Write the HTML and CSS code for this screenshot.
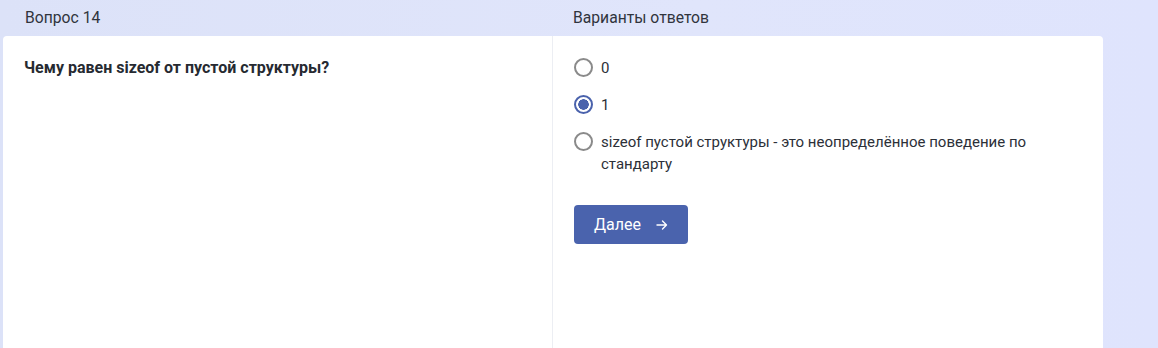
FILE: index.html
```html
<html>
<head>
    <link rel="stylesheet" href="styles.css">
</head>
<body>
    <div class="quiz">
        <div class="quiz-header">
            <div class="header-cell">Вопрос 14</div>
            <div class="header-cell">Варианты ответов</div>
        </div>

        <div class="quiz-card">
            <div class="question-col">
                <h2 class="question-text">Чему равен sizeof от пустой структуры?</h2>
            </div>
            <div class="answers-col">
                <label class="option-label">
                    <input type="radio" name="answer" value="0">
                    <span>0</span>
                </label>
                <label class="option-label">
                    <input type="radio" name="answer" value="1" checked>
                    <span>1</span>
                </label>
                <label class="option-label">
                    <input type="radio" name="answer" value="ub">
                    <span>sizeof пустой структуры - это неопределённое поведение по стандарту</span>
                </label>

                <button class="btn">
                    Далее
                    <svg class="btn-icon" width="12" height="12" viewBox="0 0 12 12">
                        <path d="M1 6 H10.5 M6.5 2 L10.5 6 L6.5 10" fill="none" stroke="#fff" stroke-width="1.4" stroke-linecap="round" stroke-linejoin="round"/>
                    </svg>
                </button>
            </div>
        </div>
    </div>
</body>
</html>
```

FILE: styles.css
```css
body {
    font-family: Roboto, "Liberation Sans", sans-serif;
    margin: 0;
    height: 348px;
    overflow: hidden;
    background: linear-gradient(90deg, #dce2f8 0%, #e0e5fb 60%, #dfe4fd 100%);
    color: #2c3038;
}

.quiz {
    width: 1100px;
    margin-left: 3px;
}

.quiz-header {
    display: grid;
    grid-template-columns: 550px 1fr;
    height: 36px;
    align-items: center;
}

.header-cell {
    font-size: 15.7px;
    color: #30343d;
    padding-left: 22px;
    padding-bottom: 2px;
}

.header-cell + .header-cell {
    padding-left: 20px;
}

.quiz-card {
    background-color: #fff;
    border-radius: 4px 4px 0 0;
    display: grid;
    grid-template-columns: 550px 1fr;
    min-height: 320px;
}

.question-col {
    padding: 21px 21px;
    border-right: 1px solid #eceef3;
}

.question-text {
    font-size: 16px;
    font-weight: bold;
    line-height: 22px;
    margin: 0;
    color: #262a31;
}

.answers-col {
    padding: 21px 20px 20px 21px;
    display: flex;
    flex-direction: column;
    align-items: flex-start;
}

.option-label {
    display: flex;
    align-items: flex-start;
    font-size: 15px;
    line-height: 22px;
    color: #2c3038;
    margin-bottom: 15px;
    max-width: 470px;
    cursor: pointer;
}

.option-label input[type="radio"] {
    appearance: none;
    -webkit-appearance: none;
    width: 19px;
    height: 19px;
    margin: 1px 8px 0 0;
    flex-shrink: 0;
    border: 2px solid #8a8a8a;
    border-radius: 50%;
    box-sizing: border-box;
    background-color: #fff;
}

.option-label input[type="radio"]:checked {
    border-color: #4a62ac;
    background: radial-gradient(circle, #4a62ac 0 5px, #fff 5.5px);
}

.btn {
    margin-top: 15px;
    width: 114px;
    height: 39px;
    border: none;
    border-radius: 4px;
    background-color: #4a63ad;
    color: #fff;
    font-family: inherit;
    font-size: 16px;
    display: flex;
    align-items: center;
    padding: 0 0 0 20px;
    gap: 15px;
    cursor: pointer;
}

.btn-icon {
    margin-top: 1px;
}
```
